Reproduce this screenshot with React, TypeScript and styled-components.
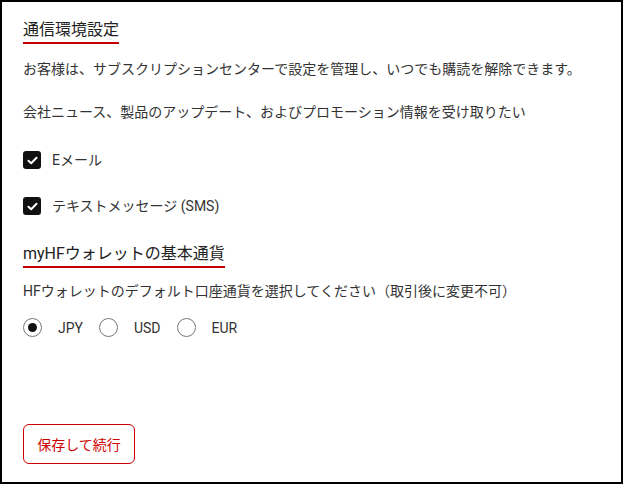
import React, { useState } from 'react';
import styled, { createGlobalStyle } from 'styled-components';

const GlobalStyle = createGlobalStyle`
  html, body {
    margin: 0;
    padding: 0;
    background: #fff;
  }
  body {
    font-family: Roboto, "Noto Sans CJK JP", sans-serif;
    color: #333;
  }
  * {
    box-sizing: border-box;
  }
`;

const currencies = ['JPY', 'USD', 'EUR'];

const App = () => {
  const [email, setEmail] = useState(true);
  const [sms, setSms] = useState(true);
  const [currency, setCurrency] = useState('JPY');

  return (
    <>
      <GlobalStyle />
      <Frame>
        <Heading>通信環境設定</Heading>
        <Text $top={15}>お客様は、サブスクリプションセンターで設定を管理し、いつでも購読を解除できます。</Text>
        <Text $top={23}>会社ニュース、製品のアップデート、およびプロモーション情報を受け取りたい</Text>

        <CheckRow $top={29} onClick={() => setEmail(!email)}>
          <Box $checked={email}>{email && <Tick />}</Box>
          <Label>Eメール</Label>
        </CheckRow>
        <CheckRow $top={28} onClick={() => setSms(!sms)}>
          <Box $checked={sms}>{sms && <Tick />}</Box>
          <Label>テキストメッセージ (SMS)</Label>
        </CheckRow>

        <Heading $top={27}>myHFウォレットの基本通貨</Heading>
        <Text $top={13}>HFウォレットのデフォルト口座通貨を選択してください（取引後に変更不可）</Text>

        <RadioGroup>
          {currencies.map((c) => (
            <RadioOption key={c} onClick={() => setCurrency(c)}>
              <Radio $selected={currency === c} />
              <Label>{c}</Label>
            </RadioOption>
          ))}
        </RadioGroup>

        <SaveButton>保存して続行</SaveButton>
      </Frame>
    </>
  );
};

const Tick = () => (
  <svg width="11" height="9" viewBox="0 0 12 10">
    <path d="M1.5 5.2 L4.5 8 L10.5 2" fill="none" stroke="#fff" strokeWidth="2.2" strokeLinecap="round" strokeLinejoin="round" />
  </svg>
);

const Frame = styled.div`
  width: 623px;
  height: 484px;
  border: 2px solid #000;
  padding: 16px 21px 18px;
  display: flex;
  flex-direction: column;
  align-items: flex-start;
`;

const Heading = styled.h2<{ $top?: number }>`
  margin: ${(p) => p.$top || 0}px 0 0;
  font-size: 16px;
  font-weight: 400;
  line-height: 24px;
  color: #222;
  border-bottom: 2px solid #c40000;
`;

const Text = styled.p<{ $top: number }>`
  margin: ${(p) => p.$top}px 0 0;
  font-size: 14px;
  line-height: 20px;
  color: #333;
`;

const CheckRow = styled.label<{ $top: number }>`
  margin-top: ${(p) => p.$top}px;
  display: flex;
  align-items: center;
  gap: 11px;
  cursor: pointer;
`;

const Box = styled.span<{ $checked: boolean }>`
  width: 18px;
  height: 18px;
  border-radius: 3px;
  background: ${(p) => (p.$checked ? '#111' : '#fff')};
  border: 2px solid #111;
  display: flex;
  align-items: center;
  justify-content: center;
`;

const Label = styled.span`
  font-size: 14px;
  line-height: 18px;
  color: #333;
`;

const RadioGroup = styled.div`
  margin-top: 17px;
  display: flex;
  align-items: center;
  gap: 16px;
`;

const RadioOption = styled.label`
  display: flex;
  align-items: center;
  gap: 16px;
  cursor: pointer;
`;

const Radio = styled.span<{ $selected: boolean }>`
  width: 19px;
  height: 19px;
  border-radius: 50%;
  border: 1.5px solid #777;
  display: flex;
  align-items: center;
  justify-content: center;

  &::after {
    content: '';
    width: 9px;
    height: 9px;
    border-radius: 50%;
    background: #111;
    display: ${(p) => (p.$selected ? 'block' : 'none')};
  }
`;

const SaveButton = styled.button`
  margin-top: auto;
  width: 112px;
  height: 40px;
  padding: 0;
  border: 1px solid #cc0000;
  border-radius: 6px;
  background: #fff;
  color: #cc0000;
  font-family: Roboto, "Noto Sans CJK JP", sans-serif;
  font-size: 14px;
  cursor: pointer;
`;

export default App;
